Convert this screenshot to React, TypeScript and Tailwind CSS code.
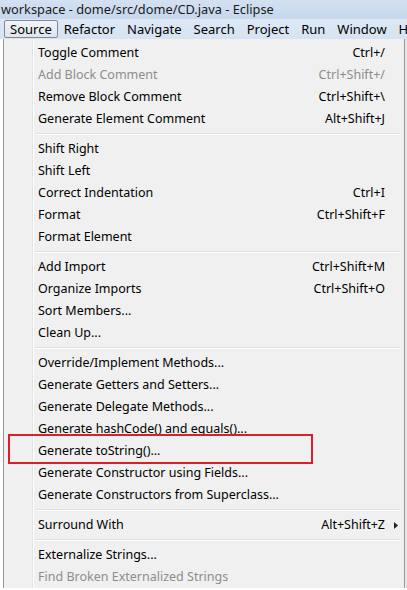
import React from 'react';

type Item =
  | { kind: 'item'; label: string; shortcut?: string; disabled?: boolean; submenu?: boolean }
  | { kind: 'sep' };

const items: Item[] = [
  { kind: 'item', label: 'Toggle Comment', shortcut: 'Ctrl+/' },
  { kind: 'item', label: 'Add Block Comment', shortcut: 'Ctrl+Shift+/', disabled: true },
  { kind: 'item', label: 'Remove Block Comment', shortcut: 'Ctrl+Shift+\\' },
  { kind: 'item', label: 'Generate Element Comment', shortcut: 'Alt+Shift+J' },
  { kind: 'sep' },
  { kind: 'item', label: 'Shift Right' },
  { kind: 'item', label: 'Shift Left' },
  { kind: 'item', label: 'Correct Indentation', shortcut: 'Ctrl+I' },
  { kind: 'item', label: 'Format', shortcut: 'Ctrl+Shift+F' },
  { kind: 'item', label: 'Format Element' },
  { kind: 'sep' },
  { kind: 'item', label: 'Add Import', shortcut: 'Ctrl+Shift+M' },
  { kind: 'item', label: 'Organize Imports', shortcut: 'Ctrl+Shift+O' },
  { kind: 'item', label: 'Sort Members...' },
  { kind: 'item', label: 'Clean Up...' },
  { kind: 'sep' },
  { kind: 'item', label: 'Override/Implement Methods...' },
  { kind: 'item', label: 'Generate Getters and Setters...' },
  { kind: 'item', label: 'Generate Delegate Methods...' },
  { kind: 'item', label: 'Generate hashCode() and equals()...' },
  { kind: 'item', label: 'Generate toString()...' },
  { kind: 'item', label: 'Generate Constructor using Fields...' },
  { kind: 'item', label: 'Generate Constructors from Superclass...' },
  { kind: 'sep' },
  { kind: 'item', label: 'Surround With', shortcut: 'Alt+Shift+Z', submenu: true },
  { kind: 'sep' },
  { kind: 'item', label: 'Externalize Strings...' },
  { kind: 'item', label: 'Find Broken Externalized Strings', disabled: true },
];

const menus = ['Source', 'Refactor', 'Navigate', 'Search', 'Project', 'Run', 'Window', 'H'];

export default function App() {
  return (
    <div
      className="relative w-[407px] h-[590px] overflow-hidden bg-white text-[12.5px] text-black"
      style={{ fontFamily: '"Noto Sans", "Open Sans", sans-serif' }}
    >
      {/* title bar */}
      <div className="h-[19px] bg-gradient-to-b from-[#d3e1f1] to-[#c6d7ec] pl-[1px] leading-[19px] text-[12.8px] text-[#1a1a1a]">
        workspace - dome/src/dome/CD.java - Eclipse
      </div>

      {/* menu bar */}
      <div className="flex h-[20px] items-center bg-gradient-to-b from-[#dde8f5] to-[#d6e3f2] pl-[4px] text-[13px]">
        {menus.map((m, i) => (
          <div
            key={m}
            className={
              i === 0
                ? 'h-[18px] rounded-[2px] border border-[#7e8a99] bg-gradient-to-b from-[#f1f4f8] to-[#dfe5ec] px-[5px] leading-[16px]'
                : 'px-[6px] leading-[18px]'
            }
          >
            {m}
          </div>
        ))}
      </div>

      {/* body */}
      <div className="flex">
        <div className="w-[3px] bg-white" />
        <div className="relative flex-1 border-x border-[#979797] bg-[#f0f0f0] pt-[3px]">
          <div className="absolute left-[28px] top-0 bottom-0 w-[1px] bg-[#e2e3e3]" />
          <div className="absolute left-[29px] top-0 bottom-0 w-[1px] bg-white" />
          {items.map((it, i) =>
            it.kind === 'sep' ? (
              <div key={i} className="flex h-[8px] items-center pl-[31px] pr-[3px]">
                <div className="h-[2px] w-full border-t border-[#e0e0e0] bg-white" />
              </div>
            ) : (
              <div
                key={i}
                className={`relative flex h-[22px] items-center pl-[34px] pr-[19px] ${
                  it.disabled ? 'text-[#8d8d8d]' : 'text-black'
                }`}
              >
                <span className="flex-1">{it.label}</span>
                {it.shortcut && <span>{it.shortcut}</span>}
                {it.submenu && (
                  <svg className="absolute right-[6px] top-[8px]" width="4" height="7" viewBox="0 0 4 7">
                    <path d="M0 0 L4 3.5 L0 7 Z" fill="#222" />
                  </svg>
                )}
              </div>
            )
          )}
        </div>
        <div className="w-[2px] bg-[#e8e8e8]" />
      </div>

      {/* highlight box */}
      <div className="absolute left-[8px] top-[434px] h-[30px] w-[305px] border-2 border-[#d9202a]" />
    </div>
  );
}
